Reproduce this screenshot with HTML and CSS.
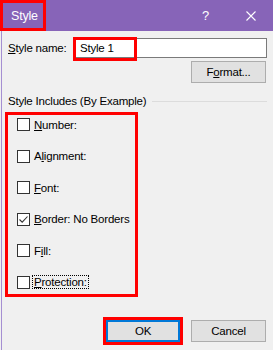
FILE: index.html
```html
<!DOCTYPE html>
<html lang="en">
<head>
    <meta charset="UTF-8">
    <meta name="viewport" content="width=device-width, initial-scale=1.0">
    <title>Style</title>
    <link rel="stylesheet" href="styles.css">
</head>
<body>

    <div class="dialog">
        <div class="titlebar">
            <div class="title">Style</div>
            <div class="help">?</div>
            <div class="close">
                <svg width="10" height="10" viewBox="0 0 10 10">
                    <path d="M0.5 0.5 L9.5 9.5 M9.5 0.5 L0.5 9.5" stroke="#fff" stroke-width="1.1" fill="none"/>
                </svg>
            </div>
        </div>

        <div class="content">
            <div class="name-row">
                <label class="name-label"><u>S</u>tyle name:</label>
                <div class="name-input">
                    <span class="name-value">Style 1</span>
                    <div class="mark-input"></div>
                </div>
            </div>

            <div class="format-row">
                <button class="btn">F<u>o</u>rmat...</button>
            </div>

            <div class="section-head">
                <span>Style Includes (By Example)</span>
                <div class="section-line"></div>
            </div>

            <div class="options">
                <div class="option"><span class="box"></span><span class="label"><u>N</u>umber:</span></div>
                <div class="option"><span class="box"></span><span class="label">A<u>l</u>ignment:</span></div>
                <div class="option"><span class="box"></span><span class="label"><u>F</u>ont:</span></div>
                <div class="option">
                    <span class="box">
                        <svg width="11" height="11" viewBox="0 0 11 11">
                            <path d="M1.5 5.5 L4.2 8.2 L9.5 2.5" stroke="#333" stroke-width="1.1" fill="none"/>
                        </svg>
                    </span>
                    <span class="label"><u>B</u>order: No Borders</span>
                </div>
                <div class="option"><span class="box"></span><span class="label">F<u>i</u>ll:</span></div>
                <div class="option"><span class="box"></span><span class="label focused"><u>P</u>rotection:</span></div>
            </div>

            <div class="actions">
                <button class="btn btn-ok">OK</button>
                <button class="btn">Cancel</button>
            </div>
        </div>
    </div>

</body>
</html>
```

FILE: styles.css
```css
body {
    margin: 0;
    width: 273px;
    height: 350px;
    overflow: hidden;
    background-color: #f0f0f0;
    font-family: "Liberation Sans", Arial, sans-serif;
    font-size: 11.5px;
    letter-spacing: -0.2px;
    color: #000;
}

.dialog {
    height: 350px;
}

.titlebar {
    height: 31px;
    background-color: #8764b8;
    color: #fff;
    display: flex;
    align-items: center;
}

.title {
    box-sizing: border-box;
    width: 46px;
    height: 31px;
    border: 3px solid #ff0000;
    padding-left: 8px;
    display: flex;
    align-items: center;
    font-size: 12.5px;
}

.help {
    margin-left: auto;
    font-size: 13px;
}

.close {
    width: 10px;
    height: 10px;
    margin-left: 37px;
    margin-right: 17px;
    display: flex;
}

.content {
    box-sizing: border-box;
    height: 319px;
    margin-left: 1px;
    border-left: 1px solid #a58fd2;
    padding: 7px 6px 0 6px;
}

.name-row {
    display: flex;
    align-items: center;
}

.name-label {
    width: 65px;
}

.name-input {
    position: relative;
    box-sizing: border-box;
    flex: 1;
    height: 20px;
    background-color: #fff;
    border: 1px solid #7a7a7a;
    display: flex;
    align-items: center;
    padding-left: 6px;
}

.mark-input {
    position: absolute;
    left: -1px;
    top: -2px;
    width: 64px;
    height: 24px;
    box-sizing: border-box;
    border: 3px solid #ff0000;
}

.format-row {
    display: flex;
    justify-content: flex-end;
    margin-top: 3px;
    padding-right: 1px;
}

.btn {
    box-sizing: border-box;
    width: 75px;
    height: 22px;
    background-color: #e1e1e1;
    border: 1px solid #adadad;
    font-family: "Liberation Sans", Arial, sans-serif;
    font-size: 11.5px;
    letter-spacing: -0.2px;
    color: #000;
    padding: 0;
}

.section-head {
    display: flex;
    align-items: center;
    height: 16px;
    margin-top: 10px;
}

.section-line {
    flex: 1;
    margin-left: 6px;
    border-top: 1px solid #dcdcdc;
}

.options {
    box-sizing: border-box;
    width: 133px;
    height: 185px;
    margin-top: 3px;
    margin-left: -3px;
    border: 3px solid #ff0000;
    padding: 1.5px 0 0 9px;
    display: flex;
    flex-direction: column;
    gap: 15.6px;
}

.option {
    height: 16px;
    display: flex;
    align-items: center;
    white-space: nowrap;
}

.box {
    box-sizing: border-box;
    flex: none;
    width: 13px;
    height: 13px;
    background-color: #fff;
    border: 1px solid #333;
    display: flex;
    align-items: center;
    justify-content: center;
}

.label {
    margin-left: 2px;
    border: 1px solid transparent;
    padding: 0 1px;
}

.focused {
    border: 1px dotted #000;
}

.actions {
    display: flex;
    justify-content: flex-end;
    gap: 11px;
    margin-top: 23px;
    padding-right: 1px;
}

.btn-ok {
    width: 74px;
    border: 2px solid #0078d7;
    outline: 3px solid #ff0000;
}
```
